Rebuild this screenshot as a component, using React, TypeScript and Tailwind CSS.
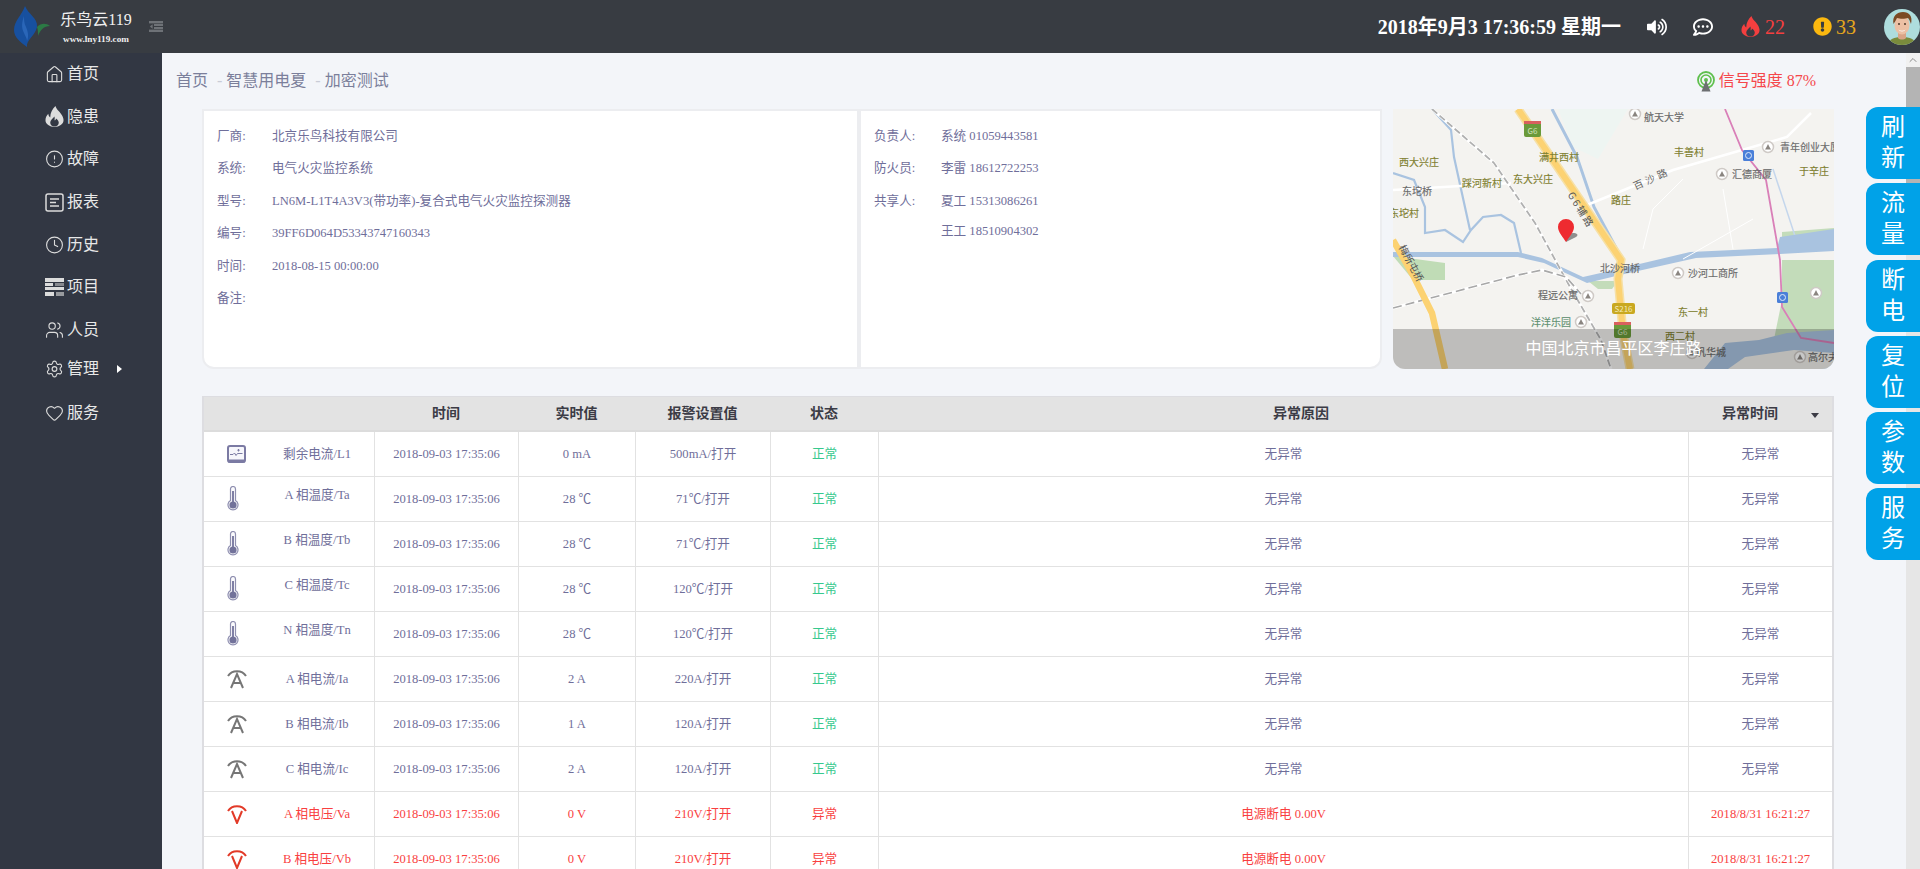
import { ChevronUp, CircleAlert, Clock, Heart, House, Settings, Users } from "lucide-react";
import { FaExclamationCircle, FaRegCommentDots, FaVolumeUp } from "react-icons/fa";

const navItems = [
  { label: "首页", icon: <House size={23} strokeWidth={1.4} />, h: "h-[42.6px]" },
  { label: "隐患", icon: <FlameIcon />, h: "h-[42.6px]" },
  { label: "故障", icon: <CircleAlert size={22} strokeWidth={1.4} />, h: "h-[42.6px]" },
  { label: "报表", icon: <ReportIcon />, h: "h-[42.6px]" },
  { label: "历史", icon: <Clock size={22} strokeWidth={1.4} />, h: "h-[42.6px]" },
  { label: "项目", icon: <ProjectIcon />, h: "h-[42.6px]" },
  { label: "人员", icon: <Users size={22} strokeWidth={1.4} />, h: "h-[42.6px]" },
  { label: "管理", icon: <Settings size={22} strokeWidth={1.4} />, h: "h-[35.4px]", arrow: true },
  { label: "服务", icon: <Heart size={22} strokeWidth={1.4} />, h: "h-[52.6px]" },
];

const info = [
  ["厂商:", "北京乐鸟科技有限公司"],
  ["系统:", "电气火灾监控系统"],
  ["型号:", "LN6M-L1T4A3V3(带功率)-复合式电气火灾监控探测器"],
  ["编号:", "39FF6D064D53343747160343"],
  ["时间:", "2018-08-15 00:00:00"],
  ["备注:", ""],
];

const rows = [
  { icon: "screen", name: "剩余电流/L1", val: "0 mA", limit: "500mA/打开" },
  { icon: "temp", name: "A 相温度/Ta", val: "28 ℃", limit: "71℃/打开" },
  { icon: "temp", name: "B 相温度/Tb", val: "28 ℃", limit: "71℃/打开" },
  { icon: "temp", name: "C 相温度/Tc", val: "28 ℃", limit: "120℃/打开" },
  { icon: "temp", name: "N 相温度/Tn", val: "28 ℃", limit: "120℃/打开" },
  { icon: "amp", name: "A 相电流/Ia", val: "2 A", limit: "220A/打开" },
  { icon: "amp", name: "B 相电流/Ib", val: "1 A", limit: "120A/打开" },
  { icon: "amp", name: "C 相电流/Ic", val: "2 A", limit: "120A/打开" },
  { icon: "volt", name: "A 相电压/Va", val: "0 V", limit: "210V/打开", bad: true },
  { icon: "volt", name: "B 相电压/Vb", val: "0 V", limit: "210V/打开", bad: true },
];

const sideButtons = [
  ["刷", "新"],
  ["流", "量"],
  ["断", "电"],
  ["复", "位"],
  ["参", "数"],
  ["服", "务"],
];

function FlameIcon() {
  return (
    <svg width="19" height="21" viewBox="0 0 20 22" fill="currentColor">
      <path
        fillRule="evenodd"
        d="M11 0c1 4 5 6 7 10 1 2 1.500 3 1.500 5 0 4-4.500 7-9.500 7S.5 19 .5 15c0-3 1-5 3-7 0 2 1 3 2 4 0-5 2.500-9 5.500-12ZM10 11c-2 2-4.500 4-4.500 6.500 0 2.200 2 4 4.500 4s4.500-1.800 4.500-4c0-2-1.500-3.500-3-4.500 0 1-.5 2-1.500 2 .3-1.500.3-2.800 0-4Z"
      />
    </svg>
  );
}

function ReportIcon() {
  return (
    <svg width="19" height="19" viewBox="0 0 19 19" fill="none" stroke="currentColor" strokeWidth="1.5">
      <rect x="1" y="1" width="17" height="17" rx="2" />
      <path d="M5 6h9M5 9.500h6M5 13h9" />
    </svg>
  );
}

function ProjectIcon() {
  return (
    <svg width="19" height="18" viewBox="0 0 19 18" fill="currentColor">
      <rect x="0" y="0" width="19" height="4" />
      <rect x="0" y="5" width="8" height="3" />
      <rect x="10" y="5" width="9" height="3" opacity="0.5" />
      <rect x="0" y="9" width="19" height="3" />
      <rect x="0" y="14" width="9" height="4" />
      <rect x="11" y="14" width="8" height="4" opacity="0.6" />
    </svg>
  );
}

function Logo() {
  return (
    <svg width="38" height="42" viewBox="0 0 38 42" className="shrink-0">
      <path d="M12 0C9 9 1 15 1 24c0 7 6 12 13 17-1-7 8-11 10-20C25 12 15 8 12 0Z" fill="#17509f" />
      <path d="M11 10c-2 6-3 11 0 17 1 3 3 5 3 8 2-5 1-9-1-14-2-4-2-7-2-11Z" fill="#2a66b8" />
      <path d="M24 21c4-4 9-4 13-1-6 0-10 4-12 10 0-4 0-6-1-9Z" fill="#2c7a45" />
    </svg>
  );
}

function MenuToggle() {
  return (
    <svg width="14" height="11" viewBox="0 0 14 11" fill="#6e7277">
      <rect x="0" y="0" width="14" height="2.400" />
      <rect x="5" y="3" width="9" height="2" />
      <rect x="5" y="6" width="9" height="2" />
      <rect x="0" y="8.600" width="14" height="2.400" />
      <path d="M3.600 3.200v4.600L.8 5.500Z" />
    </svg>
  );
}

function Avatar() {
  return (
    <svg width="36" height="36" viewBox="0 0 36 36" className="shrink-0">
      <clipPath id="avatarClip">
        <circle cx="18" cy="18" r="18" />
      </clipPath>
      <g clipPath="url(#avatarClip)">
        <rect width="36" height="36" fill="#aedddd" />
        <path d="M4 36c1-6 6-8 14-8s13 2 14 8Z" fill="#7a8b3c" />
        <path d="M14 22h8v7c-2 2-6 2-8 0Z" fill="#d9a486" />
        <ellipse cx="18" cy="16" rx="7.500" ry="9.500" fill="#ecc0a4" />
        <path d="M9.500 15C8 7 13 3 19 3c6 0 10 4 8 12-1-3-2-5-3-6-3 1-8 1-11 0-1 2-2 4-3.500 6Z" fill="#7b4a24" />
        <circle cx="15" cy="15" r="0.900" fill="#3d2a1c" />
        <circle cx="21" cy="15" r="0.900" fill="#3d2a1c" />
        <path d="M14.500 20.500c2 1.600 5 1.600 7 0-1 2.600-6 2.600-7 0Z" fill="#fff" />
      </g>
    </svg>
  );
}

function SignalIcon() {
  return (
    <svg width="18" height="21" viewBox="0 0 18 21" fill="none">
      <circle cx="9" cy="9" r="8" stroke="#5fc04e" strokeWidth="1.800" />
      <circle cx="9" cy="9" r="5" stroke="#5fc04e" strokeWidth="1.600" />
      <circle cx="9" cy="9" r="2" fill="#5fc04e" />
      <path d="M9 9l4.500 11.500h-9Z" fill="#6d6f72" />
    </svg>
  );
}

function RowIcon({ type }: { type: string }) {
  if (type === "screen") {
    return (
      <svg width="19" height="18" viewBox="0 0 19 18" fill="none">
        <rect x="1" y="1" width="17" height="16" rx="2" fill="#f6f6fb" stroke="#7b7aa3" strokeWidth="2" />
        <rect x="1" y="14.500" width="17" height="3" fill="#7b7aa3" />
        <path d="M3 9.500h3l1.500-1.500L9 10.500l1.500-2h5M11.500 4v2.500M10.300 5.200h2.400" stroke="#7b7aa3" strokeWidth="1" />
      </svg>
    );
  }
  if (type === "temp") {
    return (
      <svg width="12" height="25" viewBox="0 0 12 25" fill="none">
        <path d="M3.500 14.500V3a2.500 2.500 0 0 1 5 0v11.500a5 5 0 1 1-5 0Z" fill="#fbfbfd" stroke="#8f8fb0" strokeWidth="1.200" />
        <rect x="5" y="5" width="2" height="12" fill="#8080a5" />
        <circle cx="6" cy="19" r="3.600" fill="#72729a" />
      </svg>
    );
  }
  const color = type === "amp" ? "#767676" : "#e23a28";
  return (
    <svg width="20" height="20" viewBox="0 0 20 20" fill="none" stroke={color} strokeWidth="2">
      <path d="M1 7C5 .5 15 .5 19 7" />
      {type === "amp" ? <path d="M4 19 10 5l6 14M6 14h8" /> : <path d="M5 7l5 12 5-12" />}
    </svg>
  );
}

function MapView() {
  const labels: [string, number, number, string][] = [
    ["航天大学", 271, 12, "#6a6a6a"],
    ["丰善村", 296, 47, "#7f8030"],
    ["汇德商厦", 359, 69, "#6a6a6a"],
    ["于辛庄", 421, 66, "#7f8030"],
    ["满井西村", 166, 52, "#7f8030"],
    ["西大兴庄", 26, 57, "#7f8030"],
    ["踩河新村", 89, 78, "#7f8030"],
    ["东大兴庄", 140, 74, "#7f8030"],
    ["东坨桥", 24, 86, "#6a6a6a"],
    ["东坨村", 11, 108, "#7f8030"],
    ["路庄", 228, 95, "#7f8030"],
    ["北沙河桥", 227, 163, "#6a6a6a"],
    ["沙河工商所", 320, 168, "#6a6a6a"],
    ["程远公寓", 165, 190, "#6a6a6a"],
    ["洋洋乐园", 158, 217, "#5f9070"],
    ["东一村", 300, 207, "#7f8030"],
    ["西二村", 287, 231, "#7f8030"],
    ["巩华城", 318, 247, "#6a6a6a"],
    ["高尔夫", 430, 252, "#6a6a6a"],
  ];
  const pois = [
    [242, 5], [375, 38], [329, 65], [195, 187], [188, 213], [285, 164], [299, 244], [407, 248], [423, 184],
  ];
  return (
    <svg viewBox="0 0 441 260" className="block h-full w-full" fontSize="10" textAnchor="middle" fontFamily="'Noto Sans CJK SC', sans-serif">
      <rect width="441" height="260" fill="#f4f3f0" />
      <path d="M165 0h70l-30 50-25-12Z" fill="#eef5f2" />
      <path d="M0 147l52 7v17H20Z" fill="#c0dcb6" />
      <path d="M389 151h52v70l-61 14 9-44Z" fill="#c3dcba" />
      <path d="M389 123l52-4v5l-52 5Z" fill="#c3dcba" />
      <path d="M195 172h30l-6 8h-14Z" fill="#c3dcba" />
      <path d="M0 64l21 7 11 27v26l20-3 18 12 8-12 12-13 18-2 13 8 7 30M39 0l19 21 3 27 16 73" stroke="#a9c3e0" strokeWidth="2.200" fill="none" />
      <path d="M159 0l25 48 17 50 27 50" stroke="#a9c3e0" strokeWidth="3" fill="none" />
      <path d="M380 60l23 70" stroke="#c4d6ec" strokeWidth="1.500" fill="none" />
      <path d="M0 143h125l24 6 41 19 31-7 76-18 87-4 3-11 54-8v22l-54 3-84 4-76 17-33 8-43-20-26-6H0Z" fill="#a9c3e0" />
      <path d="M311 260l21-26 34-3 28-7 47-3v39Z" fill="#a9c3e0" />
      <path d="M335 260l17-12 49-7 40 3v16Z" fill="#f0efeb" />
      <path d="M0 81l118-7M194 96l86-35 69-20 45-13 24-24" stroke="#fff" strokeWidth="2.500" fill="none" />
      <path d="M290 70l-30 30-10 40M330 80l10 60M360 110l-70 40" stroke="#fff" strokeWidth="1" fill="none" />
      <path d="M39 0l62 54 41 60 35 64 31 53 10 29" stroke="#fff" strokeWidth="3" fill="none" />
      <path d="M39 0l62 54 41 60 35 64 31 53 10 29" stroke="#b0b0b0" strokeWidth="1.800" strokeDasharray="7 3" fill="none" />
      <path d="M0 199l125-33 24-5 24 7 15 17" stroke="#fff" strokeWidth="3" fill="none" />
      <path d="M0 199l125-33 24-5 24 7 15 17" stroke="#a8a8a8" strokeWidth="1.600" strokeDasharray="9 4" fill="none" />
      <path d="M125 0l103 151-3 19 5 54 7 36" stroke="#f6e0a6" strokeWidth="9" fill="none" />
      <path d="M125 0l103 151-3 19 5 54 7 36" stroke="#fcd272" strokeWidth="6" fill="none" />
      <path d="M0 131l21 37 18 36 13 56" stroke="#fcd272" strokeWidth="6.500" fill="none" />
      <path d="M332 0l17 41 24 30 14 80 2 47 19 31 33 5" stroke="#d97fb8" strokeWidth="1.800" fill="none" />
      <rect x="131" y="12" width="17" height="16" rx="2" fill="#6a9a3a" />
      <rect x="131" y="12" width="17" height="3" fill="#d9605e" />
      <text x="139.500" y="25" fontSize="8" fill="#cfe0b8">G6</text>
      <rect x="221" y="213" width="17" height="16" rx="2" fill="#6a9a3a" />
      <rect x="221" y="213" width="17" height="3" fill="#d9605e" />
      <text x="229.500" y="226" fontSize="8" fill="#cfe0b8">G6</text>
      <rect x="219" y="194" width="23" height="11" rx="2" fill="#c9a820" />
      <text x="230.500" y="203" fontSize="8" fill="#f3e9b5">S216</text>
      {[[350, 41], [384, 183]].map(([x, y]) => (
        <g key={x}>
          <rect x={x} y={y} width="11" height="11" rx="1.500" fill="#4a7fd8" />
          <circle cx={x + 5.500} cy={y + 5.500} r="3" fill="none" stroke="#dfe9fa" strokeWidth="1" />
        </g>
      ))}
      {pois.map(([x, y]) => (
        <g key={`${x}-${y}`}>
          <circle cx={x} cy={y} r="5.500" fill="#fff" stroke="#cfcac6" strokeWidth="1.500" />
          <path d={`M${x - 3} ${y + 2.500}h6l-1.500-2.500-1.500-3-1.500 3Z`} fill="#8a8580" />
        </g>
      ))}
      {labels.map(([text, x, y, color]) => (
        <text key={text} x={x} y={y} fill={color} stroke={color} strokeWidth="0.150">{text}</text>
      ))}
      <text x="387" y="42" textAnchor="start" fill="#6a6a6a" stroke="#6a6a6a" strokeWidth="0.150">青年创业大厦</text>
      <text transform="translate(260 73) rotate(-24)" fill="#666" letterSpacing="3">百沙路</text>
      <text transform="translate(185 103) rotate(58)" fill="#555" letterSpacing="2">G6辅路</text>
      <text transform="translate(15 156) rotate(62)" fill="#555">梅所屯桥</text>
      <path d="M173 133l10-5c3-2 1-4-3-4l-6 1Z" fill="#8f8f8f" />
      <path d="M173 133c-3-5-8-10-8-15a8 8 0 0 1 16 0c0 5-5 10-8 15Z" fill="#ee2b30" />
    </svg>
  );
}

export default function App() {
  return (
    <div className="relative flex h-screen w-full flex-col overflow-hidden bg-[#f3f5f9] text-[12.6px] text-[#6f6e9a] [font-family:'Liberation_Serif','Noto_Sans_CJK_SC',serif]">
      <header className="flex h-[53px] shrink-0 items-center bg-[#383c42]">
        <div className="ml-[13px]">
          <Logo />
        </div>
        <div className="ml-[5px] flex w-[80px] flex-col items-center">
          <div className="text-[16px] leading-[24px] text-[#f0f0f0]">乐鸟云119</div>
          <div className="text-[9.2px] leading-[14px] font-bold text-[#f0f0f0]">www.lny119.com</div>
        </div>
        <div className="ml-[13px]">
          <MenuToggle />
        </div>
        <div className="ml-auto flex items-center">
          <div className="text-[20px] font-bold whitespace-nowrap text-white">2018年9月3 17:36:59 星期一</div>
          <FaVolumeUp size={20} className="ml-[26px] text-white" />
          <FaRegCommentDots size={20} className="ml-[26px] text-white" />
          <span className="ml-[28px] text-[#f43f3f]">
            <FlameIcon />
          </span>
          <span className="ml-[5px] text-[20px] text-[#f43f3f]">22</span>
          <FaExclamationCircle size={19} className="ml-[28px] text-[#fbb80f]" />
          <span className="ml-[4px] text-[20px] text-[#e8a81c]">33</span>
          <div className="ml-[28px]">
            <Avatar />
          </div>
        </div>
      </header>

      <div className="flex min-h-0 flex-1">
        <aside className="w-[162px] shrink-0 bg-[#323743] text-[16px] text-[#e8e8e8]">
          {navItems.map((item) => (
            <div key={item.label} className={`flex items-center pl-[45px] ${item.h}`}>
              <span className="flex w-[19px] justify-center text-[#dcdcdc]">{item.icon}</span>
              <span className="ml-[3px]">{item.label}</span>
              {item.arrow && (
                <span className="ml-[18px] h-0 w-0 border-y-[4.5px] border-l-[5px] border-y-transparent border-l-white" />
              )}
            </div>
          ))}
        </aside>

        <main className="min-w-0 flex-1 pr-[72px] pl-[40px]">
          <div className="flex h-[56px] items-center justify-between pr-[18px] text-[16px] text-[#7b7f9b]">
            <div className="ml-[-26px] flex items-center">
              <span>首页</span>
              <span className="mr-[4px] ml-[9px] text-[#c9ccd6]">-</span>
              <span>智慧用电夏</span>
              <span className="mr-[4px] ml-[9px] text-[#c9ccd6]">-</span>
              <span>加密测试</span>
            </div>
            <div className="flex items-center text-[#f5474b]">
              <SignalIcon />
              <span className="ml-[4px]">信号强度 87%</span>
            </div>
          </div>

          <div className="flex h-[260px]">
            <div className="w-[659px] rounded-bl-xl border-y-2 border-r-4 border-l-2 border-[#ecedf0] bg-white pt-[9px] pl-[13px]">
              {info.map(([label, value]) => (
                <div key={label} className="flex h-[32.5px] items-center">
                  <span className="w-[55px]">{label}</span>
                  <span>{value}</span>
                </div>
              ))}
            </div>
            <div className="w-[521px] rounded-br-xl border-y-2 border-r-2 border-[#ecedf0] bg-white pt-[9px] pl-[13px]">
              <div className="flex h-[32.5px] items-center">
                <span className="w-[67px]">负责人:</span>
                <span>系统 01059443581</span>
              </div>
              <div className="flex h-[32.5px] items-center">
                <span className="w-[67px]">防火员:</span>
                <span>李雷 18612722253</span>
              </div>
              <div className="flex h-[32.5px] items-center">
                <span className="w-[67px]">共享人:</span>
                <span>夏工 15313086261</span>
              </div>
              <div className="flex h-[27px] items-center pl-[67px]">
                <span>王工 18510904302</span>
              </div>
            </div>
            <div className="relative ml-[11px] flex-1 overflow-hidden rounded-b-xl">
              <MapView />
              <div className="absolute inset-x-0 bottom-0 flex h-[40px] items-center justify-center bg-black/[0.22] text-[16px] text-white">
                中国北京市昌平区李庄路
              </div>
            </div>
          </div>

          <div className="mt-[27px] border-t border-r-2 border-l-2 border-[#dddde1] bg-white">
            <table className="w-full table-fixed border-separate border-spacing-0">
              <colgroup>
                <col className="w-[170px]" />
                <col className="w-[144px]" />
                <col className="w-[117px]" />
                <col className="w-[135px]" />
                <col className="w-[108px]" />
                <col />
                <col className="w-[144px]" />
              </colgroup>
              <thead>
                <tr className="h-[35px] bg-[#e3e3e3] text-[14px] font-bold text-[#3c3c46]">
                  <th className="border-b-2 border-[#dcdcdc]" />
                  <th className="border-b-2 border-[#dcdcdc]">时间</th>
                  <th className="border-b-2 border-[#dcdcdc]">实时值</th>
                  <th className="border-b-2 border-[#dcdcdc]">报警设置值</th>
                  <th className="border-b-2 border-[#dcdcdc]">状态</th>
                  <th className="border-b-2 border-[#dcdcdc] pl-[36px]">异常原因</th>
                  <th className="relative border-b-2 border-[#dcdcdc] pr-[20px]">
                    异常时间
                    <span className="absolute top-[16px] right-[13px] h-0 w-0 border-x-[4px] border-t-[5px] border-x-transparent border-t-[#3c3c46]" />
                  </th>
                </tr>
              </thead>
              <tbody>
                {rows.map((row) => {
                  const tone = row.bad ? "text-[#f93f3f]" : "";
                  const cell = "border-b border-l border-[#e2e2e2] text-center";
                  return (
                    <tr key={row.name} className={`h-[45px] ${tone}`}>
                      <td className="border-b border-[#e2e2e2]">
                        <div className="flex items-center pl-[23px]">
                          <span className="flex w-[33px] shrink-0">
                            <RowIcon type={row.icon} />
                          </span>
                          <span className={`flex-1 text-center ${row.icon === "temp" ? "pb-[7px]" : ""}`}>{row.name}</span>
                        </div>
                      </td>
                      <td className={cell}>2018-09-03 17:35:06</td>
                      <td className={cell}>{row.val}</td>
                      <td className={cell}>{row.limit}</td>
                      <td className={`${cell} ${row.bad ? "" : "text-[#36c98e]"}`}>{row.bad ? "异常" : "正常"}</td>
                      <td className={cell}>{row.bad ? "电源断电 0.00V" : "无异常"}</td>
                      <td className={cell}>{row.bad ? "2018/8/31 16:21:27" : "无异常"}</td>
                    </tr>
                  );
                })}
              </tbody>
            </table>
          </div>
        </main>

        <div className="flex w-[14px] shrink-0 flex-col bg-[#e6e6e6]">
          <div className="flex h-[14px] items-center justify-center bg-[#f1f1f1] text-[#8a8a8a]">
            <ChevronUp size={12} />
          </div>
          <div className="h-[178px] bg-[#b4b4b4]" />
        </div>
      </div>

      <div className="absolute top-[107px] right-0 flex flex-col gap-[4.3px]">
        {sideButtons.map(([a, b]) => (
          <div
            key={a}
            className="flex h-[72px] w-[54px] flex-col items-center justify-center rounded-l-xl bg-[#00a2e8] text-[24px] leading-[31px] text-white"
          >
            <span>{a}</span>
            <span>{b}</span>
          </div>
        ))}
      </div>
    </div>
  );
}
